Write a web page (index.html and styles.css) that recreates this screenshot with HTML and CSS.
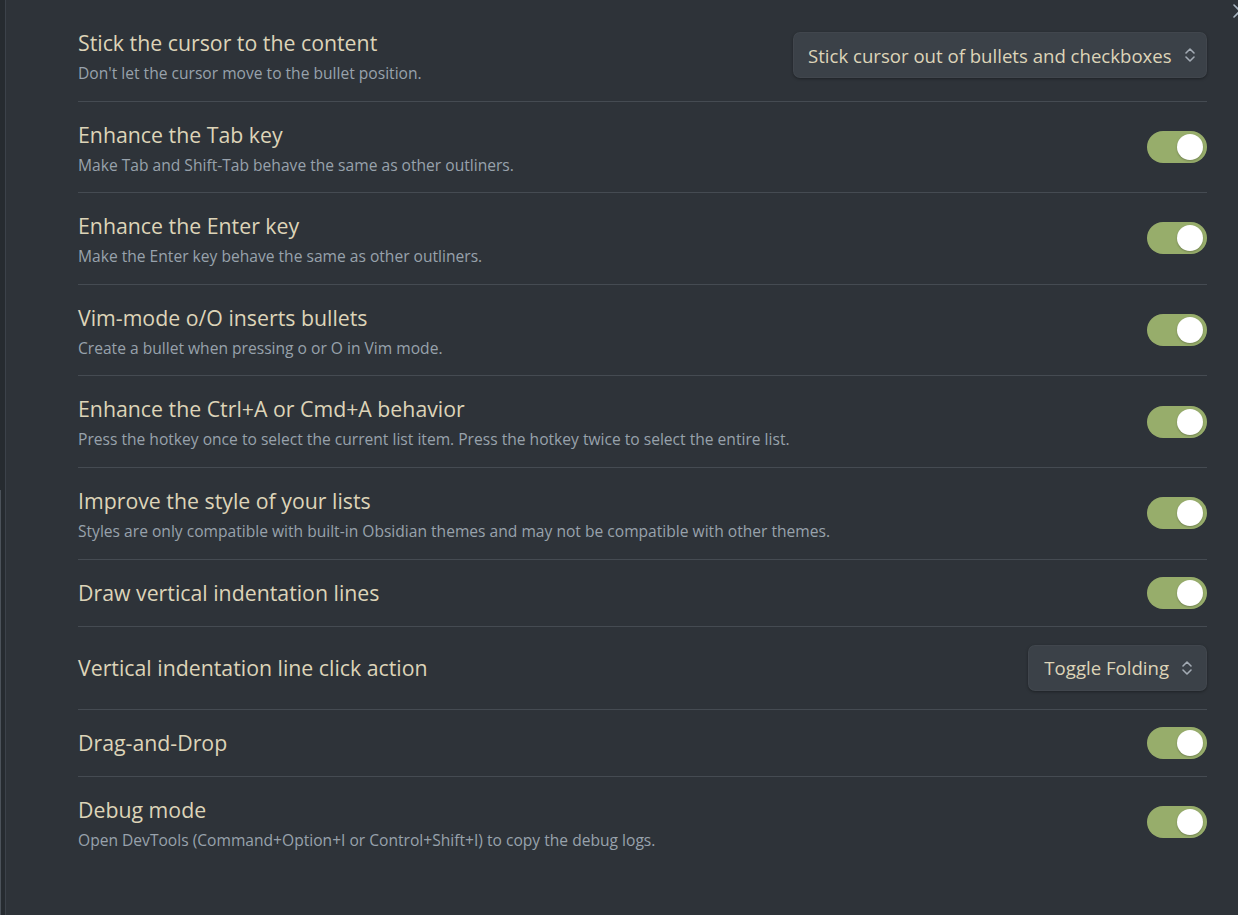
FILE: index.html
```html
<!DOCTYPE html>
<html lang="en">
<head>
<meta charset="utf-8">
<title>Outliner settings</title>
<link rel="stylesheet" href="styles.css">
</head>
<body>
<div class="app">
  <div class="side-strip"></div>
  <main class="pane">
    <div class="setting">
      <div class="info">
        <div class="name">Stick the cursor to the content</div>
        <div class="desc">Don't let the cursor move to the bullet position.</div>
      </div>
      <div class="control">
        <div class="dropdown dropdown-wide"><span>Stick cursor out of bullets and checkboxes</span>
          <svg class="chev" viewBox="0 0 12 18" width="12" height="18"><path d="M2 7 L6 3 L10 7 M2 11 L6 15 L10 11" fill="none" stroke="currentColor" stroke-width="1.6" stroke-linecap="round" stroke-linejoin="round"/></svg>
        </div>
      </div>
    </div>
    <div class="setting">
      <div class="info">
        <div class="name">Enhance the Tab key</div>
        <div class="desc">Make Tab and Shift-Tab behave the same as other outliners.</div>
      </div>
      <div class="control"><div class="toggle"><div class="knob"></div></div></div>
    </div>
    <div class="setting">
      <div class="info">
        <div class="name">Enhance the Enter key</div>
        <div class="desc">Make the Enter key behave the same as other outliners.</div>
      </div>
      <div class="control"><div class="toggle"><div class="knob"></div></div></div>
    </div>
    <div class="setting">
      <div class="info">
        <div class="name">Vim-mode o/O inserts bullets</div>
        <div class="desc">Create a bullet when pressing o or O in Vim mode.</div>
      </div>
      <div class="control"><div class="toggle"><div class="knob"></div></div></div>
    </div>
    <div class="setting">
      <div class="info">
        <div class="name">Enhance the Ctrl+A or Cmd+A behavior</div>
        <div class="desc">Press the hotkey once to select the current list item. Press the hotkey twice to select the entire list.</div>
      </div>
      <div class="control"><div class="toggle"><div class="knob"></div></div></div>
    </div>
    <div class="setting">
      <div class="info">
        <div class="name">Improve the style of your lists</div>
        <div class="desc">Styles are only compatible with built-in Obsidian themes and may not be compatible with other themes.</div>
      </div>
      <div class="control"><div class="toggle"><div class="knob"></div></div></div>
    </div>
    <div class="setting">
      <div class="info">
        <div class="name">Draw vertical indentation lines</div>
      </div>
      <div class="control"><div class="toggle"><div class="knob"></div></div></div>
    </div>
    <div class="setting">
      <div class="info">
        <div class="name">Vertical indentation line click action</div>
      </div>
      <div class="control">
        <div class="dropdown"><span>Toggle Folding</span>
          <svg class="chev" viewBox="0 0 12 18" width="12" height="18"><path d="M2 7 L6 3 L10 7 M2 11 L6 15 L10 11" fill="none" stroke="currentColor" stroke-width="1.6" stroke-linecap="round" stroke-linejoin="round"/></svg>
        </div>
      </div>
    </div>
    <div class="setting">
      <div class="info">
        <div class="name">Drag-and-Drop</div>
      </div>
      <div class="control"><div class="toggle"><div class="knob"></div></div></div>
    </div>
    <div class="setting last">
      <div class="info">
        <div class="name">Debug mode</div>
        <div class="desc">Open DevTools (Command+Option+I or Control+Shift+I) to copy the debug logs.</div>
      </div>
      <div class="control"><div class="toggle"><div class="knob"></div></div></div>
    </div>
  </main>
  <div class="close-btn">
    <svg viewBox="0 0 16 16" width="16" height="16"><path d="M2 2 L14 14 M14 2 L2 14" stroke="currentColor" stroke-width="1.6" stroke-linecap="round"/></svg>
  </div>
</div>
</body>
</html>
```

FILE: styles.css
```css
html, body {
  margin: 0;
  padding: 0;
  height: 100%;
  background: #2e3339;
  overflow: hidden;
}

body {
  font-family: "Open Sans", "Noto Sans", "Liberation Sans", sans-serif;
}

.app {
  position: relative;
  display: flex;
  height: 915px;
  width: 1238px;
}

.side-strip {
  width: 5px;
  flex: none;
  background:
    linear-gradient(to right, #4b525a 0, #4b525a 1px, transparent 1px) 0 490px / 100% 100% no-repeat,
    #262b30;
  border-right: 1px solid #3c424a;
}

.pane {
  flex: 1;
  padding: 10px 31px 0 72px;
}

.setting {
  display: flex;
  align-items: center;
  gap: 20px;
  padding: 17px 0;
  border-bottom: 1px solid #454b52;
}

.setting.last {
  border-bottom: none;
}

.info {
  flex: 1;
  min-width: 0;
}

.name {
  color: #ddd4b8;
  font-size: 21.3px;
  line-height: 32px;
}

.desc {
  color: #98a2ac;
  font-size: 15.6px;
  line-height: 19.6px;
  padding-top: 5px;
}

.control {
  flex: none;
  display: flex;
  align-items: center;
}

.dropdown {
  display: flex;
  align-items: center;
  gap: 12px;
  height: 46px;
  margin: 1px 0;
  box-sizing: border-box;
  padding: 0 14px 0 16px;
  background: #3b4148;
  border-radius: 7px;
  box-shadow: 0 1px 3px rgba(0, 0, 0, 0.35), inset 0 0 0 1px rgba(255, 255, 255, 0.03);
  color: #ddd4b8;
  font-size: 18.6px;
}

.dropdown-wide {
  width: 414px;
  padding-left: 15px;
}

.dropdown span {
  flex: 1;
  white-space: nowrap;
}

.chev {
  color: #a3abb4;
  flex: none;
}

.toggle {
  width: 60px;
  height: 32px;
  border-radius: 16px;
  background: #97ad6b;
  display: flex;
  align-items: center;
  justify-content: flex-end;
  padding: 0 4px;
  box-sizing: border-box;
}

.knob {
  width: 26px;
  height: 26px;
  border-radius: 50%;
  background: #ffffff;
  box-shadow: 0 1px 2px rgba(0, 0, 0, 0.25);
}

.close-btn {
  position: absolute;
  top: 2px;
  left: 1232px;
  color: #a9b6c2;
}
```
